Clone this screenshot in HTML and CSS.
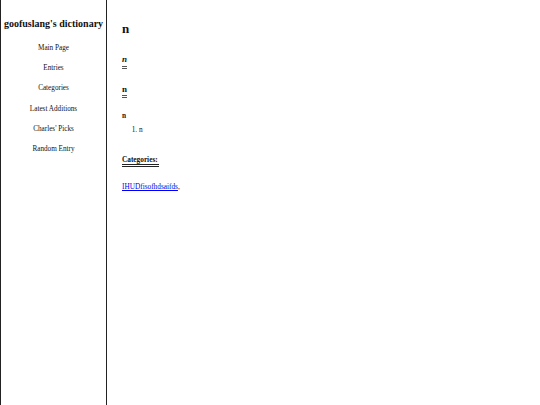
FILE: index.html
```html
<!DOCTYPE html>
<html>
<head>
<meta charset="utf-8">
<link rel="stylesheet" href="styles.css">
</head>
<body>
<div class="layout">
  <nav class="sidebar">
    <h1 class="site-title">goofuslang's dictionary</h1>
    <ul class="nav">
      <li>Main Page</li>
      <li>Entries</li>
      <li>Categories</li>
      <li>Latest Additions</li>
      <li>Charles' Picks</li>
      <li>Random Entry</li>
    </ul>
  </nav>
  <main class="content">
    <h2 class="word">n</h2>
    <div class="section first"><span class="ul ital">n</span></div>
    <div class="section second"><span class="ul plain">n</span></div>
    <div class="pos">n</div>
    <ol class="defs"><li>n</li></ol>
    <div class="cats"><span class="cats-label">Categories:</span></div>
    <div class="cat-links"><a href="#">IHUDfisofhdsaifds</a>,</div>
  </main>
</div>
</body>
</html>
```
FILE: styles.css
```css
html, body { margin: 0; padding: 0; }
body { font-family: "Liberation Serif", "Times New Roman", serif; color: #111; background: #fff; }
.layout { display: flex; height: 405px; }
.sidebar { width: 105px; border-left: 1px solid #222; border-right: 1px solid #222; text-align: center; }
.site-title { font-size: 10px; line-height: 12px; font-weight: bold; margin: 18px 0 0; white-space: nowrap; }
.nav { list-style: none; margin: 8px 0 0; padding: 0; font-size: 7.2px; }
.nav li { line-height: 20.2px; }
.content { padding-left: 15px; font-size: 7.3px; }
.word { font-size: 13px; line-height: 15px; margin: 21px 0 0; }
.section { font-size: 9px; line-height: 9px; font-weight: bold; }
.section.first { margin-top: 18.5px; }
.section.second { margin-top: 16px; }
.ul { display: inline-block; border-bottom: 3px double #555; }
.ital { font-style: italic; padding-bottom: 2px; }
.plain { padding-bottom: 1px; }
.pos { margin-top: 13.5px; font-weight: bold; line-height: 9px; }
.defs { margin: 4.5px 0 0; padding-left: 17px; line-height: 9px; }
.cats { margin-top: 21px; font-weight: bold; line-height: 9px; }
.cats-label { display: inline-block; border-bottom: 3px double #222; padding-right: 1px; }
.cat-links { margin-top: 15px; line-height: 9px; }
.cat-links a { color: #00e; }
```
